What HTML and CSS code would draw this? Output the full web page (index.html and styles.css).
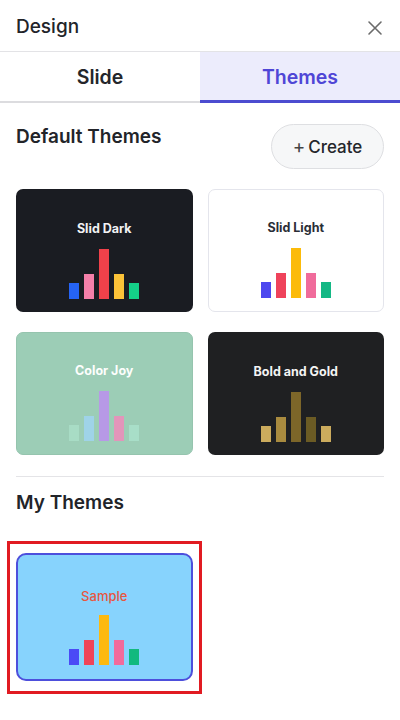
FILE: index.html
```html
<!DOCTYPE html>
<html lang="en">
<head>
<meta charset="utf-8">
<title>Design</title>
<link rel="stylesheet" href="styles.css">
</head>
<body>
<div class="panel">
  <header class="header">
    <h1 class="header-title">Design</h1>
    <button class="close" aria-label="Close">
      <svg width="16" height="16" viewBox="0 0 16 16"><path d="M2 2 L14 14 M14 2 L2 14" stroke="#6b6b6b" stroke-width="1.6" stroke-linecap="round" fill="none"/></svg>
    </button>
  </header>
  <nav class="tabs">
    <div class="tab">Slide</div>
    <div class="tab active">Themes</div>
  </nav>
  <section class="section">
    <div class="section-head">
      <h2 class="section-title">Default Themes</h2>
      <button class="create"><span class="plus">+</span>Create</button>
    </div>
    <div class="grid">
      <div class="card dark">
        <div class="card-title">Slid Dark</div>
        <div class="bars">
          <span class="bar s" style="background:#2563f5"></span>
          <span class="bar m" style="background:#f47fa9"></span>
          <span class="bar l" style="background:#f0414a"></span>
          <span class="bar m" style="background:#fbc238"></span>
          <span class="bar s" style="background:#14cf88"></span>
        </div>
      </div>
      <div class="card light">
        <div class="card-title">Slid Light</div>
        <div class="bars">
          <span class="bar s" style="background:#4d48ef"></span>
          <span class="bar m" style="background:#ef435b"></span>
          <span class="bar l" style="background:#fcbb0a"></span>
          <span class="bar m" style="background:#f06b9b"></span>
          <span class="bar s" style="background:#14b885"></span>
        </div>
      </div>
      <div class="card joy">
        <div class="card-title">Color Joy</div>
        <div class="bars">
          <span class="bar s" style="background:#a8dcc5"></span>
          <span class="bar m" style="background:#9fd3e8"></span>
          <span class="bar l" style="background:#b799e6"></span>
          <span class="bar m" style="background:#e295ba"></span>
          <span class="bar s" style="background:#a8dec8"></span>
        </div>
      </div>
      <div class="card gold">
        <div class="card-title">Bold and Gold</div>
        <div class="bars">
          <span class="bar s" style="background:#cbab5d"></span>
          <span class="bar m" style="background:#a98b3f"></span>
          <span class="bar l" style="background:#7d6629"></span>
          <span class="bar m" style="background:#6b5b24"></span>
          <span class="bar s" style="background:#cbab5d"></span>
        </div>
      </div>
    </div>
  </section>
  <hr class="divider">
  <section class="section my">
    <h2 class="section-title">My Themes</h2>
    <div class="grid my-grid">
      <div class="highlight">
        <div class="card sample">
          <div class="card-title">Sample</div>
          <div class="bars">
            <span class="bar s" style="background:#4a4af6"></span>
            <span class="bar m" style="background:#ef4459"></span>
            <span class="bar l" style="background:#fdb90f"></span>
            <span class="bar m" style="background:#f16b9b"></span>
            <span class="bar s" style="background:#12b97e"></span>
          </div>
        </div>
      </div>
    </div>
  </section>
</div>
</body>
</html>
```
FILE: styles.css
```css
* { box-sizing: border-box; }
html, body { margin: 0; padding: 0; background: #fff; }
body {
  font-family: Inter, "Noto Sans", "Liberation Sans", sans-serif;
  color: #24262b;
  width: 400px;
}
.panel { width: 400px; padding-bottom: 39px; }

.header {
  height: 52px;
  padding: 0 16px;
  display: flex;
  align-items: center;
  justify-content: space-between;
  border-bottom: 1px solid #e3e3e6;
}
.header-title {
  margin: 0;
  font-size: 19px;
  font-weight: 500;
  line-height: 24px;
  color: #222429;
  margin-top: 2px;
}
.close {
  border: 0;
  background: none;
  padding: 0;
  width: 16px;
  height: 16px;
  margin-right: 1px;
  margin-top: 5px;
  display: flex;
}

.tabs {
  display: grid;
  grid-template-columns: 1fr 1fr;
}
.tab {
  height: 51px;
  display: flex;
  align-items: center;
  justify-content: center;
  font-size: 19.5px;
  font-weight: 600;
  color: #24262b;
  border-bottom: 2px solid #dcdcdf;
  padding-top: 1px;
}
.tab.active {
  background: #ececfc;
  color: #4f46d6;
  border-bottom: 3px solid #4c4cd0;
  padding-top: 2px;
}

.section { padding: 0 16px; }
.section-head {
  display: flex;
  justify-content: space-between;
  align-items: flex-start;
  padding-top: 21px;
}
.section-title {
  margin: 0;
  font-size: 19px;
  font-weight: 600;
  line-height: 24px;
  color: #222429;
  margin-top: 1px;
}
.create {
  height: 45px;
  width: 113px;
  border-radius: 23px;
  border: 1px solid #dedfe2;
  background: #f6f7f8;
  font-family: inherit;
  font-size: 17px;
  font-weight: 500;
  color: #24262b;
  display: flex;
  align-items: center;
  justify-content: center;
  gap: 3px;
  padding: 0;
}
.plus { font-weight: 400; color: #444; font-size: 19px; }

.grid {
  display: grid;
  grid-template-columns: 1fr 1fr;
  column-gap: 15px;
  row-gap: 20px;
  margin-top: 20px;
}
.card {
  height: 123px;
  border-radius: 7px;
  display: flex;
  flex-direction: column;
  align-items: center;
  justify-content: flex-end;
  padding-bottom: 13px;
}
.card-title {
  font-size: 12.5px;
  font-weight: 700;
  line-height: 16px;
  margin-bottom: 12px;
}
.bars {
  display: flex;
  align-items: flex-end;
  gap: 5px;
  height: 50px;
}
.bar { width: 10px; display: block; }
.bar.s { height: 16px; }
.bar.m { height: 25px; }
.bar.l { height: 50px; }

.dark { background: #1a1c22; color: #f2f2f4; }
.light { background: #fff; border: 1px solid #e4e5ec; color: #2a2d36; }
.joy { background: #9ccdb6; color: #fdfefd; border: 1px solid #95c4ae; }
.gold { background: #1f2022; color: #f4f4f4; }

.divider {
  border: 0;
  border-top: 1px solid #e4e4e7;
  margin: 21px 16px 0;
  height: 0;
}
.my .section-title { margin-top: 14px; }
.my-grid { margin-top: 38px; }

.highlight { position: relative; }
.highlight::after {
  content: "";
  position: absolute;
  left: -9px;
  right: -9px;
  top: -12px;
  bottom: -13px;
  border: 3px solid #e11b22;
  pointer-events: none;
}
.sample {
  height: 128px;
  background: #87d3fd;
  border: 2px solid #4d4fdc;
  border-radius: 10px;
  padding-bottom: 14px;
  color: #e8563f;
}
.sample .card-title { font-weight: 500; font-size: 13px; margin-bottom: 11px; }
```
